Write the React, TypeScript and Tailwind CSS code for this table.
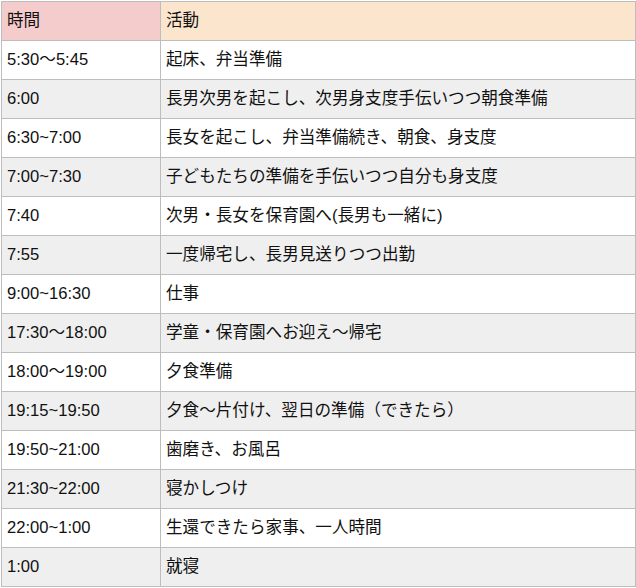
const rows: [string, string][] = [
  ["5:30〜5:45", "起床、弁当準備"],
  ["6:00", "長男次男を起こし、次男身支度手伝いつつ朝食準備"],
  ["6:30~7:00", "長女を起こし、弁当準備続き、朝食、身支度"],
  ["7:00~7:30", "子どもたちの準備を手伝いつつ自分も身支度"],
  ["7:40", "次男・長女を保育園へ(長男も一緒に)"],
  ["7:55", "一度帰宅し、長男見送りつつ出勤"],
  ["9:00~16:30", "仕事"],
  ["17:30〜18:00", "学童・保育園へお迎え〜帰宅"],
  ["18:00〜19:00", "夕食準備"],
  ["19:15~19:50", "夕食〜片付け、翌日の準備（できたら）"],
  ["19:50~21:00", "歯磨き、お風呂"],
  ["21:30~22:00", "寝かしつけ"],
  ["22:00~1:00", "生還できたら家事、一人時間"],
  ["1:00", "就寝"],
]

export default function App() {
  return (
    <div
      className="ml-px mt-px w-[635px] border-l border-t border-[#bdbdbd] text-[16.6px] text-[#111]"
      style={{ fontFamily: '"Liberation Sans", Arial, "Noto Sans CJK JP", sans-serif' }}
    >
      {/* header */}
      <div className="flex">
        <div className="flex h-[39px] w-[159px] items-center border-b border-r border-[#bdbdbd] bg-[#f4cccc] pl-[5px] pt-px">
          時間
        </div>
        <div className="flex h-[39px] w-[475px] items-center border-b border-r border-[#bdbdbd] bg-[#fce5cd] pl-[5px] pt-px">
          活動
        </div>
      </div>
      {rows.map(([time, act], i) => (
        <div key={i} className={i % 2 === 0 ? "flex bg-white" : "flex bg-[#efefef]"}>
          <div className="flex h-[39px] w-[159px] items-center border-b border-r border-[#bdbdbd] pl-[5px] pt-px">
            {time}
          </div>
          <div className="flex h-[39px] w-[475px] items-center border-b border-r border-[#bdbdbd] pl-[5px] pt-px">
            {act}
          </div>
        </div>
      ))}
    </div>
  )
}
